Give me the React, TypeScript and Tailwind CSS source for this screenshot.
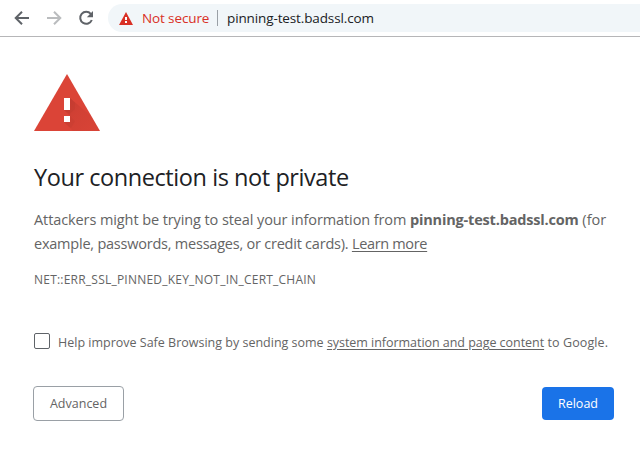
import React from "react";

function Toolbar() {
  return (
    <header className="flex h-[37px] items-start border-b border-[#b6b6b8] bg-white pt-1">
      <div className="flex h-7 w-[108px] shrink-0 items-center pl-[14px] text-[#5f6368]">
        <svg className="h-4 w-4" viewBox="0 0 16 16" fill="none" stroke="currentColor" strokeWidth="2">
          <path d="M15 8H2.5M8 1.7L1.7 8L8 14.3" />
        </svg>
        <svg className="ml-4 h-4 w-4 text-[#babcbe]" viewBox="0 0 16 16" fill="none" stroke="currentColor" strokeWidth="2">
          <path d="M1 8h12.5M8 1.7L14.3 8L8 14.3" />
        </svg>
        <svg className="ml-4 h-4 w-4" viewBox="0 0 16 16" fill="none">
          <path d="M12.8 3.9A6 6 0 1 0 13.8 10" stroke="currentColor" strokeWidth="2" />
          <path d="M15 1v6.2H8.8z" fill="currentColor" />
        </svg>
      </div>
      <div className="flex h-7 flex-1 items-center rounded-l-full bg-[#f1f6f9] pl-[11px] text-[13.5px] leading-5">
        <svg className="h-[13px] w-[14px] shrink-0" viewBox="0 0 14 13">
          <path d="M7 0L14 13H0z" fill="#d93025" />
          <path d="M6 5h2v3H6zM6 9h2v2H6z" fill="#fff" />
        </svg>
        <span className="ml-[9px] w-[67px] shrink-0 whitespace-nowrap tracking-[-0.12px] text-[#d93025]">Not secure</span>
        <span className="ml-2 h-4 w-px shrink-0 bg-[#9aa0a6]" />
        <span className="ml-[9px] whitespace-nowrap tracking-[-0.12px] text-[#202124]">pinning-test.badssl.com</span>
      </div>
    </header>
  );
}

function WarningIcon() {
  return (
    <svg className="h-[57px] w-[66px]" viewBox="0 0 66 57">
      <defs>
        <linearGradient id="shade" gradientUnits="userSpaceOnUse" x1="33" y1="27" x2="60" y2="54">
          <stop offset="0" stopColor="#b5362c" stopOpacity="0.5" />
          <stop offset="0.4" stopColor="#b5362c" stopOpacity="0.25" />
          <stop offset="1" stopColor="#b5362c" stopOpacity="0.1" />
        </linearGradient>
      </defs>
      <path d="M33 0L66 57H0z" fill="#db4437" />
      <path d="M36 24L57 42L66 57H39L30 48L36 42L30 36z" fill="url(#shade)" />
      <path d="M36 24L41 29V35L36 40L30 36zM36 42L41 47L37 54L30 48z" fill="#b5362c" opacity="0.2" />
      <path d="M30 24h6v12h-6zM30 42h6v6h-6z" fill="#fff" />
    </svg>
  );
}

export default function App() {
  return (
    <div className="h-[452px] w-[640px] overflow-hidden bg-white font-['Open_Sans','Noto_Sans',sans-serif] text-[#646464]">
      <Toolbar />
      <main className="pl-[34px] pt-[37px]">
        <WarningIcon />
        <h1 className="mt-[31px] whitespace-nowrap text-[23.5px] leading-[30px] tracking-[-0.43px] text-[#202124]">Your connection is not private</h1>
        <div className="mt-4 whitespace-nowrap text-[14.5px] leading-6">
          <p>
            <span className="tracking-[-0.095px]">Attackers might be trying to steal your information from </span>
            <strong className="font-bold tracking-[-0.18px]">pinning-test.badssl.com</strong>
            <span> (for</span>
          </p>
          <p>
            <span className="tracking-[-0.225px]">example, passwords, messages, or credit cards). </span>
            <a className="tracking-[-0.33px] underline underline-offset-2">Learn more</a>
          </p>
        </div>
        <p className="mt-3 whitespace-nowrap text-xs leading-6 tracking-[0.22px]">NET::ERR_SSL_PINNED_KEY_NOT_IN_CERT_CHAIN</p>
        <div className="mt-[41px] flex h-[18px] items-start whitespace-nowrap text-[12.5px] leading-5">
          <span className="h-4 w-4 shrink-0 rounded-xs border border-[#5f6368]" />
          <p className="ml-2">
            <span>Help improve Safe Browsing by sending some </span>
            <a className="tracking-[-0.04px] underline underline-offset-2">system information and page content</a>
            <span className="tracking-[0.1px]"> to Google.</span>
          </p>
        </div>
        <div className="-ml-px mt-[35px] flex w-[581px] items-center justify-between text-[12.5px] leading-5">
          <button className="h-[35px] w-[91px] rounded border border-[#9aa0a6] pt-px">Advanced</button>
          <button className="h-[33px] w-[72px] rounded bg-[#1a73e8] pt-px text-white">Reload</button>
        </div>
      </main>
    </div>
  );
}
